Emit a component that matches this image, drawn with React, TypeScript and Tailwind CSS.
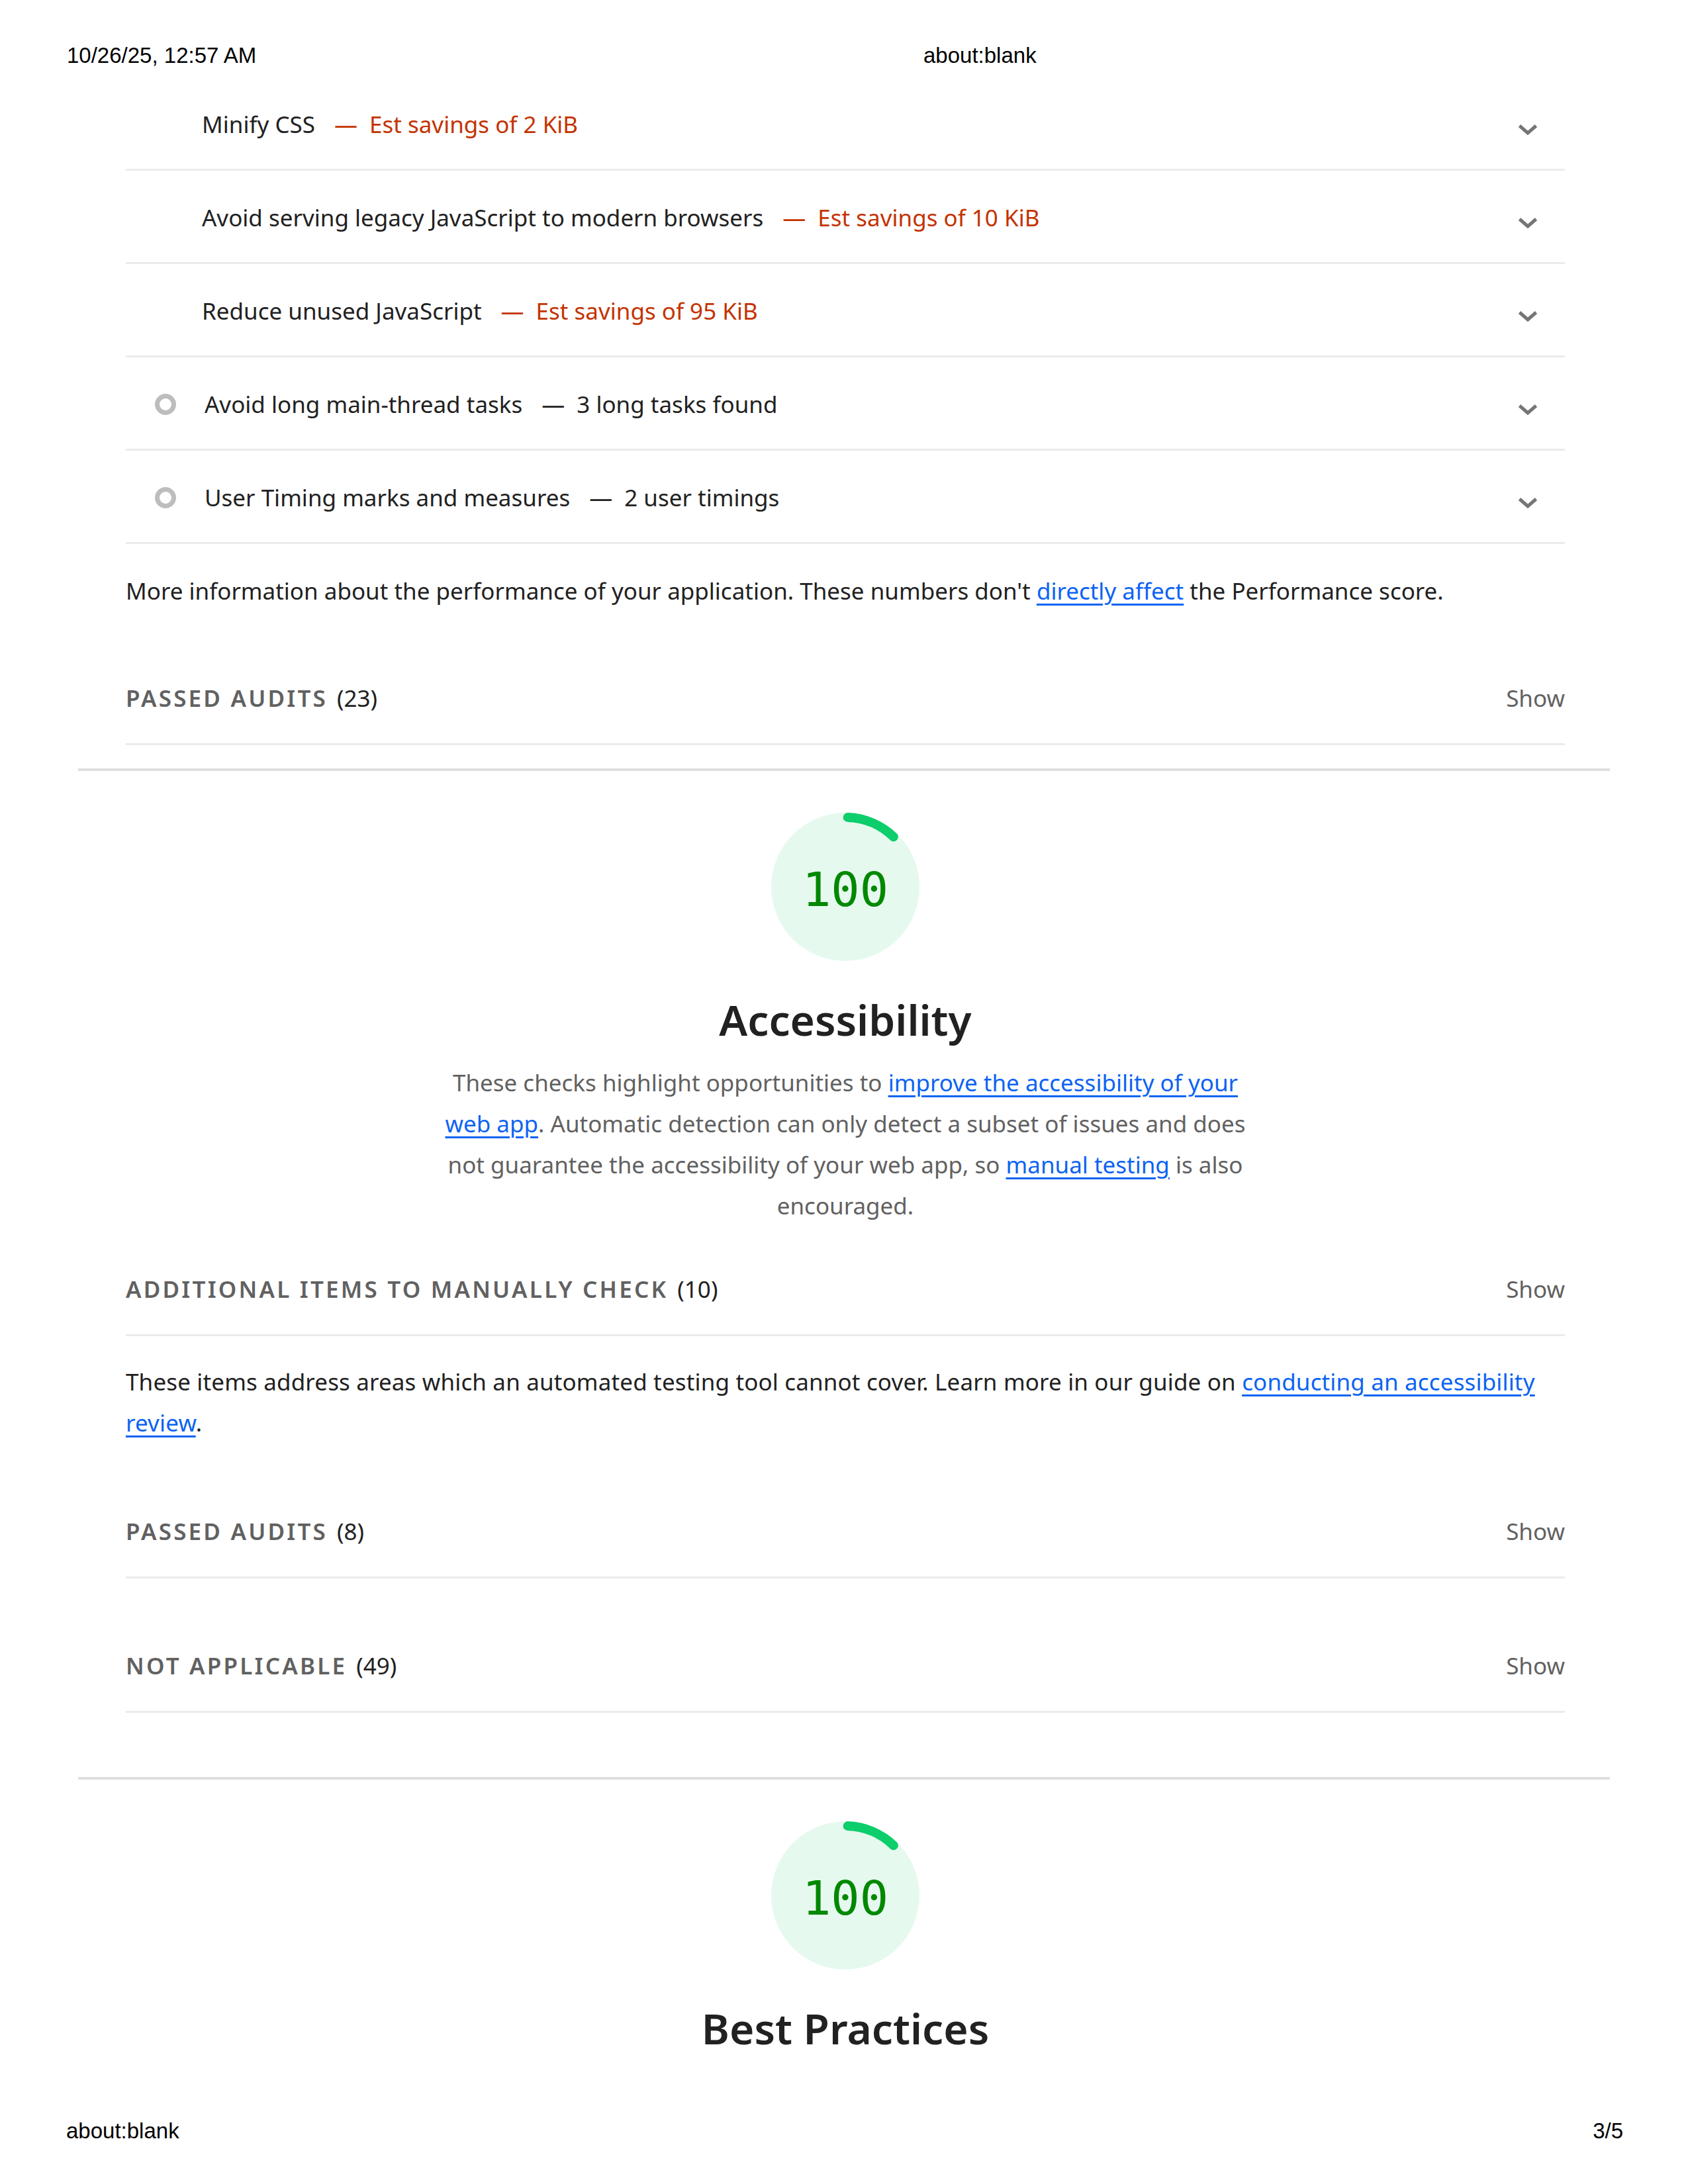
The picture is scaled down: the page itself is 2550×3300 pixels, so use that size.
import React from "react";

type AuditRow = { title: string; extra: string; kind: "opportunity" | "info" };

const rows: AuditRow[] = [
  { title: "Minify CSS", extra: "Est savings of 2 KiB", kind: "opportunity" },
  { title: "Avoid serving legacy JavaScript to modern browsers", extra: "Est savings of 10 KiB", kind: "opportunity" },
  { title: "Reduce unused JavaScript", extra: "Est savings of 95 KiB", kind: "opportunity" },
  { title: "Avoid long main-thread tasks", extra: "3 long tasks found", kind: "info" },
  { title: "User Timing marks and measures", extra: "2 user timings", kind: "info" },
];

function Chevron() {
  return (
    <svg width="30" height="17" viewBox="0 0 30 17" className="ml-auto mr-[41px] mt-[14px] shrink-0">
      <path d="M2.5 3 L15 14 L27.5 3" fill="none" stroke="#757575" strokeWidth="5" />
    </svg>
  );
}

function Audit({ row }: { row: AuditRow }) {
  const opp = row.kind === "opportunity";
  return (
    <div className={`flex h-[141px] items-center border-b-[3px] border-[#ebebeb] pt-[4px] ${opp ? "pl-[115px]" : "pl-[44px]"}`}>
      {!opp && <span className="mr-[43px] h-[32px] w-[32px] shrink-0 rounded-full border-[7px] border-[#bdbdbd]" />}
      <span className="whitespace-nowrap">{row.title}</span>
      <span className={`ml-[29px] whitespace-nowrap ${opp ? "text-[#c33300]" : "text-[#212121]"}`}>
        —<span className="ml-[18px]">{row.extra}</span>
      </span>
      <Chevron />
    </div>
  );
}

function GroupHeader({ label, count, pt }: { label: string; count: number; pt: string }) {
  return (
    <div className={`flex items-center border-b-[3px] border-[#ebebeb] pb-[37px] ${pt}`}>
      <span className="font-semibold uppercase tracking-[3.2px] text-[#616161]">{label}</span>
      <span className="ml-[14px] text-[#212121]">({count})</span>
      <span className="ml-auto text-[#616161]">Show</span>
    </div>
  );
}

function Gauge() {
  return (
    <div className="relative flex h-[224px] w-[224px] items-center justify-center">
      <svg width="224" height="224" viewBox="0 0 224 224" className="absolute inset-0">
        <circle cx="112" cy="112" r="112" fill="#e6f9ef" />
        <path d="M115.7 7.1 A105 105 0 0 1 184.9 36.5" fill="none" stroke="#0cce6b" strokeWidth="14" strokeLinecap="round" />
      </svg>
      <span className="relative mt-[8px] font-['DejaVu_Sans_Mono',monospace] text-[72px] leading-[72px] text-[#008800]">100</span>
    </div>
  );
}

const link = "text-[#0d63f3] underline underline-offset-[6px] decoration-[3px]";

export default function App() {
  return (
    <div className="flex h-[3300px] w-[2550px] flex-col bg-white text-[#212121]">
      <header className="flex h-[117px] shrink-0 pl-[101px] pt-[65px] font-['Liberation_Sans',Arial,sans-serif] text-[33px] leading-[38px] text-black">
        <span className="w-[1294px]">10/26/25, 12:57 AM</span>
        <span>about:blank</span>
      </header>

      <main className="flex-1 overflow-hidden px-[118px] font-['Noto_Sans',sans-serif] text-[35px] leading-[62px]">
        <section className="pb-[35px] pl-[72px] pr-[68px]">
          {rows.map((r) => (
            <Audit key={r.title} row={r} />
          ))}
          <p className="mt-[40px] whitespace-nowrap">
            More information about the performance of your application. These numbers don't{" "}
            <a className={link}>directly affect</a> the Performance score.
          </p>
          <GroupHeader label="Passed audits" count={23} pt="pt-[100px]" />
        </section>

        <section className="border-t-4 border-[#e0e0e0] pl-[72px] pr-[68px] pb-[97px]">
          <div className="flex flex-col items-center pt-[63px]">
            <Gauge />
            <h2 className="mt-[47px] text-[64px] font-semibold leading-[84px] text-[#212121]">Accessibility</h2>
            <p className="mt-[22px] whitespace-nowrap text-center text-[#616161]">
              These checks highlight opportunities to{" "}
              <a className={link}>
                improve the accessibility of your
                <br />
                web app
              </a>
              . Automatic detection can only detect a subset of issues and does
              <br />
              not guarantee the accessibility of your web app, so <a className={link}>manual testing</a> is also
              <br />
              encouraged.
            </p>
          </div>
          <GroupHeader label="Additional items to manually check" count={10} pt="pt-[64px]" />
          <p className="mt-[38px] whitespace-nowrap tracking-[0.15px]">
            These items address areas which an automated testing tool cannot cover. Learn more in our guide on{" "}
            <a className={link}>
              conducting an accessibility
              <br />
              review
            </a>
            .
          </p>
          <GroupHeader label="Passed audits" count={8} pt="pt-[102px]" />
          <GroupHeader label="Not applicable" count={49} pt="pt-[101px]" />
        </section>

        <section className="border-t-4 border-[#e0e0e0] pl-[72px] pr-[68px]">
          <div className="flex flex-col items-center pt-[63px]">
            <Gauge />
            <h2 className="mt-[47px] text-[64px] font-semibold leading-[84px] text-[#212121]">Best Practices</h2>
          </div>
        </section>
      </main>

      <footer className="flex h-[99px] shrink-0 justify-between pl-[100px] pr-[98px] font-['Liberation_Sans',Arial,sans-serif] text-[33px] leading-[38px] text-black">
        <span>about:blank</span>
        <span>3/5</span>
      </footer>
    </div>
  );
}
